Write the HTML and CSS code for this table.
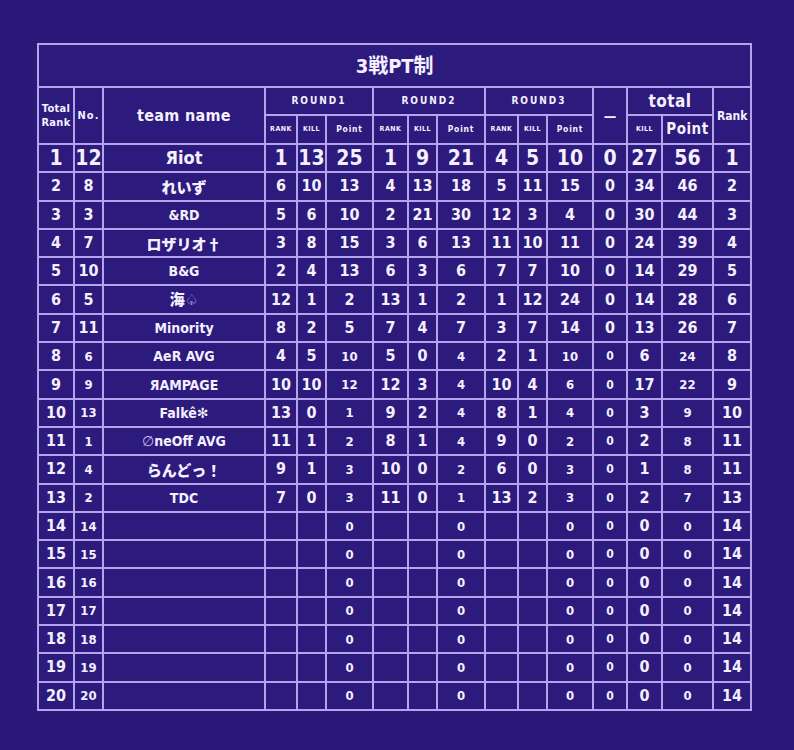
FILE: index.html
```html
<!DOCTYPE html>
<html lang="ja">
<head>
<meta charset="utf-8">
<title>3戦PT制</title>
<link rel="stylesheet" href="styles.css">
</head>
<body>
<div class="page">
<table class="board">
<colgroup>
<col style="width:36px"><col style="width:29px"><col style="width:162px">
<col style="width:32px"><col style="width:29px"><col style="width:47px">
<col style="width:35px"><col style="width:29px"><col style="width:48px">
<col style="width:33px"><col style="width:29px"><col style="width:46px">
<col style="width:34px"><col style="width:35px"><col style="width:51px"><col style="width:38px">
</colgroup>
<thead>
<tr class="title-row"><th colspan="16" class="title">3戦PT制</th></tr>
<tr class="h1">
<th rowspan="2" class="h-total"><span class="ln">Total</span><span class="ln">Rank</span></th>
<th rowspan="2" class="h-no">No.</th>
<th rowspan="2" class="h-team">team name</th>
<th colspan="3" class="h-round">ROUND1</th>
<th colspan="3" class="h-round">ROUND2</th>
<th colspan="3" class="h-round">ROUND3</th>
<th rowspan="2" class="h-dash">—</th>
<th colspan="2" class="h-tot">total</th>
<th rowspan="2" class="h-rank">Rank</th>
</tr>
<tr class="h2">
<th class="h-sub">RANK</th><th class="h-sub">KILL</th><th class="h-pt">Point</th>
<th class="h-sub">RANK</th><th class="h-sub">KILL</th><th class="h-pt">Point</th>
<th class="h-sub">RANK</th><th class="h-sub">KILL</th><th class="h-pt">Point</th>
<th class="h-sub">KILL</th><th class="h-tpt">Point</th>
</tr>
</thead>
<tbody>
<tr class="first"><td>1</td><td>12</td><td class="team">Яiot</td><td>1</td><td>13</td><td>25</td><td>1</td><td>9</td><td>21</td><td>4</td><td>5</td><td>10</td><td>0</td><td>27</td><td>56</td><td>1</td></tr>
<tr><td>2</td><td>8</td><td class="team jp">れいず</td><td>6</td><td>10</td><td>13</td><td>4</td><td>13</td><td>18</td><td>5</td><td>11</td><td>15</td><td>0</td><td>34</td><td>46</td><td>2</td></tr>
<tr><td>3</td><td>3</td><td class="team">&amp;RD</td><td>5</td><td>6</td><td>10</td><td>2</td><td>21</td><td>30</td><td>12</td><td>3</td><td>4</td><td>0</td><td>30</td><td>44</td><td>3</td></tr>
<tr><td>4</td><td>7</td><td class="team jp">ロザリオ†</td><td>3</td><td>8</td><td>15</td><td>3</td><td>6</td><td>13</td><td>11</td><td>10</td><td>11</td><td>0</td><td>24</td><td>39</td><td>4</td></tr>
<tr><td>5</td><td>10</td><td class="team">B&amp;G</td><td>2</td><td>4</td><td>13</td><td>6</td><td>3</td><td>6</td><td>7</td><td>7</td><td>10</td><td>0</td><td>14</td><td>29</td><td>5</td></tr>
<tr><td>6</td><td>5</td><td class="team jp">海<span class="spade">♤</span></td><td>12</td><td>1</td><td>2</td><td>13</td><td>1</td><td>2</td><td>1</td><td>12</td><td>24</td><td>0</td><td>14</td><td>28</td><td>6</td></tr>
<tr><td>7</td><td>11</td><td class="team">Minority</td><td>8</td><td>2</td><td>5</td><td>7</td><td>4</td><td>7</td><td>3</td><td>7</td><td>14</td><td>0</td><td>13</td><td>26</td><td>7</td></tr>
<tr><td>8</td><td class="sm">6</td><td class="team">AeR AVG</td><td>4</td><td>5</td><td class="sm">10</td><td>5</td><td>0</td><td class="sm">4</td><td>2</td><td>1</td><td class="sm">10</td><td class="xs">0</td><td>6</td><td class="sm">24</td><td>8</td></tr>
<tr><td>9</td><td class="sm">9</td><td class="team">ЯAMPAGE</td><td>10</td><td>10</td><td class="sm">12</td><td>12</td><td>3</td><td class="sm">4</td><td>10</td><td>4</td><td class="sm">6</td><td class="xs">0</td><td>17</td><td class="sm">22</td><td>9</td></tr>
<tr><td>10</td><td class="sm">13</td><td class="team">Falkê<span class="star">✻</span></td><td>13</td><td>0</td><td class="sm">1</td><td>9</td><td>2</td><td class="sm">4</td><td>8</td><td>1</td><td class="sm">4</td><td class="xs">0</td><td>3</td><td class="sm">9</td><td>10</td></tr>
<tr><td>11</td><td class="sm">1</td><td class="team"><span class="null">∅</span>neOff AVG</td><td>11</td><td>1</td><td class="sm">2</td><td>8</td><td>1</td><td class="sm">4</td><td>9</td><td>0</td><td class="sm">2</td><td class="xs">0</td><td>2</td><td class="sm">8</td><td>11</td></tr>
<tr><td>12</td><td class="sm">4</td><td class="team jp">らんどっ！</td><td>9</td><td>1</td><td class="sm">3</td><td>10</td><td>0</td><td class="sm">2</td><td>6</td><td>0</td><td class="sm">3</td><td class="xs">0</td><td>1</td><td class="sm">8</td><td>11</td></tr>
<tr><td>13</td><td class="sm">2</td><td class="team">TDC</td><td>7</td><td>0</td><td class="sm">3</td><td>11</td><td>0</td><td class="sm">1</td><td>13</td><td>2</td><td class="sm">3</td><td class="xs">0</td><td>2</td><td class="sm">7</td><td>13</td></tr>
<tr><td>14</td><td class="sm">14</td><td class="team"></td><td></td><td></td><td class="sm">0</td><td></td><td></td><td class="sm">0</td><td></td><td></td><td class="sm">0</td><td class="xs">0</td><td>0</td><td class="sm">0</td><td>14</td></tr>
<tr><td>15</td><td class="sm">15</td><td class="team"></td><td></td><td></td><td class="sm">0</td><td></td><td></td><td class="sm">0</td><td></td><td></td><td class="sm">0</td><td class="xs">0</td><td>0</td><td class="sm">0</td><td>14</td></tr>
<tr><td>16</td><td class="sm">16</td><td class="team"></td><td></td><td></td><td class="sm">0</td><td></td><td></td><td class="sm">0</td><td></td><td></td><td class="sm">0</td><td class="xs">0</td><td>0</td><td class="sm">0</td><td>14</td></tr>
<tr><td>17</td><td class="sm">17</td><td class="team"></td><td></td><td></td><td class="sm">0</td><td></td><td></td><td class="sm">0</td><td></td><td></td><td class="sm">0</td><td class="xs">0</td><td>0</td><td class="sm">0</td><td>14</td></tr>
<tr><td>18</td><td class="sm">18</td><td class="team"></td><td></td><td></td><td class="sm">0</td><td></td><td></td><td class="sm">0</td><td></td><td></td><td class="sm">0</td><td class="xs">0</td><td>0</td><td class="sm">0</td><td>14</td></tr>
<tr><td>19</td><td class="sm">19</td><td class="team"></td><td></td><td></td><td class="sm">0</td><td></td><td></td><td class="sm">0</td><td></td><td></td><td class="sm">0</td><td class="xs">0</td><td>0</td><td class="sm">0</td><td>14</td></tr>
<tr><td>20</td><td class="sm">20</td><td class="team"></td><td></td><td></td><td class="sm">0</td><td></td><td></td><td class="sm">0</td><td></td><td></td><td class="sm">0</td><td class="xs">0</td><td>0</td><td class="sm">0</td><td>14</td></tr>
</tbody>
</table>
</div>
</body>
</html>
```

FILE: styles.css
```css
html, body {
  margin: 0;
  padding: 0;
  background: #2b1979;
}
.page {
  width: 794px;
  height: 750px;
  padding: 43px 0 0 37px;
  box-sizing: border-box;
  background: #2b1979;
}
.board {
  border-collapse: collapse;
  table-layout: fixed;
  width: 715px;
  color: #f4f0ff;
  font-family: "DejaVu Sans Condensed", "Noto Sans CJK JP", sans-serif;
  font-weight: bold;
  background: #2c1a7d;
}
.board th, .board td {
  border: 2px solid #b5a3ee;
  padding: 0;
  text-align: center;
  vertical-align: middle;
  overflow: hidden;
  white-space: nowrap;
  line-height: 1;
}
.title-row { height: 43px; }
.title {
  font-size: 20px;
}
.h1 { height: 28px; }
.h2 { height: 29px; }
.h-total {
  font-size: 11px;
  letter-spacing: 0.3px;
}
.h-total .ln {
  display: block;
  line-height: 14px;
}
.h-no {
  font-size: 11px;
  letter-spacing: 1px;
}
.h-team {
  font-size: 16px;
  letter-spacing: 0.3px;
}
.h-round {
  font-size: 10px;
  letter-spacing: 2px;
}
.h-sub {
  font-size: 7px;
  letter-spacing: 0.5px;
}
.h-pt {
  font-size: 8.5px;
  letter-spacing: 0.8px;
}
.h-dash { font-size: 14px; }
.h-tot {
  font-size: 17px;
  letter-spacing: 0.5px;
}
.h-tpt {
  font-size: 15px;
  letter-spacing: 0.5px;
}
.h-rank {
  font-size: 12px;
}
tbody tr { height: 28.3px; }
tbody td { font-size: 16px; }
tbody tr.first td { font-size: 21px; }
tbody td.sm { font-size: 13px; }
tbody td.xs { font-size: 12px; }
tbody td.team {
  font-size: 14px;
}
tbody td.team.jp {
  font-family: "Noto Sans CJK JP", sans-serif;
  font-weight: 900;
  font-size: 15px;
}
tbody tr.first td.team { font-size: 18px; }
.spade { font-family: "DejaVu Sans", sans-serif; font-size: 15px; font-weight: normal; color: #c9bcf5; }
.star { font-family: "DejaVu Sans", sans-serif; font-weight: normal; }
.null { font-family: "DejaVu Sans", sans-serif; font-weight: normal; color: #c9bcf5; }
```
